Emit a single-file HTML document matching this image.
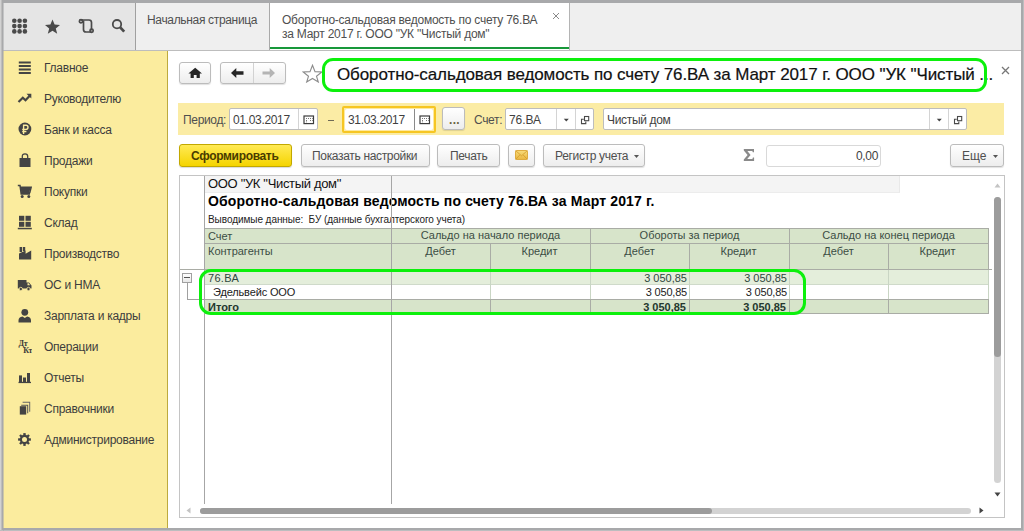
<!DOCTYPE html>
<html><head><meta charset="utf-8">
<style>
*{margin:0;padding:0;box-sizing:border-box}
html,body{width:1024px;height:531px;overflow:hidden;background:#a8a9ab;font-family:"Liberation Sans",sans-serif;color:#333;position:relative}
.a{position:absolute}
.t{position:absolute;white-space:nowrap;line-height:1}
.btn{position:absolute;border:1px solid #bcbcbc;border-radius:3px;background:linear-gradient(#ffffff,#ededed);box-shadow:0 1px 1px rgba(0,0,0,.12)}
.inp{position:absolute;border:1px solid #bdbdbd;border-radius:2px;background:#fff}
.side .t{font-size:12px;color:#3d3d3d;left:44px;letter-spacing:-0.25px}
.side svg{position:absolute;left:17px}
</style></head><body>
<!-- content base -->
<div class="a" style="left:0;top:0;width:1px;height:531px;background:#d2d2d2"></div>
<div class="a" style="left:1px;top:0;width:1px;height:531px;background:#bdbdbd"></div>
<div class="a" style="left:3px;top:3px;width:1018px;height:525px;background:#fff"></div>
<!-- top bar -->
<div class="a" style="left:3px;top:3px;width:132px;height:47px;background:#e5e5e5"></div>
<div class="a" style="left:135px;top:3px;width:1px;height:47px;background:#a0a0a0"></div>
<div class="a" style="left:136px;top:3px;width:885px;height:47px;background:#efefef"></div>
<div class="a" style="left:3px;top:50px;width:1018px;height:1px;background:#bdbdbd"></div>
<!-- top icons -->
<svg class="a" style="left:11px;top:17px" width="18" height="18" viewBox="0 0 18 18">
  <g fill="#4a4a4a">
    <circle cx="3.3" cy="3.8" r="2.3"/><circle cx="8.6" cy="3.8" r="2.3"/><circle cx="13.9" cy="3.8" r="2.3"/>
    <circle cx="3.3" cy="9.1" r="2.3"/><circle cx="8.6" cy="9.1" r="2.3"/><circle cx="13.9" cy="9.1" r="2.3"/>
    <circle cx="3.3" cy="14.4" r="2.3"/><circle cx="8.6" cy="14.4" r="2.3"/><circle cx="13.9" cy="14.4" r="2.3"/>
  </g>
</svg>
<svg class="a" style="left:44px;top:19px" width="17" height="16" viewBox="0 0 17 16">
  <polygon fill="#4a4a4a" points="8.5,0.6 10.6,5.6 16,5.9 11.8,9.4 13.2,14.8 8.5,11.8 3.8,14.8 5.2,9.4 1,5.9 6.4,5.6"/>
</svg>
<svg class="a" style="left:78px;top:18px" width="17" height="16" viewBox="0 0 17 16">
  <g fill="none" stroke="#4a4a4a" stroke-width="1.7">
    <path d="M2.5 2 H11 Q13.5 2 13.5 4.5 V12.5"/>
    <path d="M5.5 2.5 V11.5 Q5.5 14 8 14 H13.5"/>
    <circle cx="3" cy="3.2" r="1.6"/>
    <circle cx="13.6" cy="12.8" r="1.6"/>
  </g>
</svg>
<svg class="a" style="left:110px;top:17px" width="17" height="17" viewBox="0 0 17 17">
  <circle cx="7" cy="7.2" r="4.2" fill="none" stroke="#4a4a4a" stroke-width="1.8"/>
  <path d="M10.2 10.4 L14.2 14.6" stroke="#4a4a4a" stroke-width="2.8"/>
</svg>

<!-- tabs -->
<div class="t" style="left:147px;top:14px;font-size:12px;letter-spacing:-0.33px;color:#4f4f4f">Начальная страница</div>
<div class="a" style="left:269px;top:3px;width:1px;height:47px;background:#a9a9a9"></div>
<div class="a" style="left:270px;top:3px;width:299px;height:47px;background:#fff"></div>
<div class="a" style="left:569px;top:3px;width:1px;height:47px;background:#b4b4b4"></div>
<div class="a" style="left:270px;top:47px;width:299px;height:2px;background:#18983a"></div>
<div class="t" style="left:282px;top:13px;font-size:12px;letter-spacing:-0.24px;line-height:14px;color:#4f4f4f">Оборотно-сальдовая ведомость по счету 76.ВА<br>за Март 2017 г. ООО "УК "Чистый дом"</div>
<svg class="a" style="left:552px;top:12px" width="8" height="8" viewBox="0 0 8 8"><path d="M1 1 L7 7 M7 1 L1 7" stroke="#8a8a8a" stroke-width="1"/></svg>

<!-- sidebar -->
<div class="a" style="left:3px;top:51px;width:164px;height:477px;background:#fbec9e"></div>
<div class="a" style="left:167px;top:51px;width:1px;height:477px;background:#bdaa3e"></div>
<div class="side">
  <svg style="top:60px" width="15" height="15" viewBox="0 0 15 15"><g fill="#444"><rect x="1.8" y="1.5" width="12" height="2"/><rect x="1.8" y="5" width="12" height="2"/><rect x="1.8" y="8.5" width="12" height="2"/><rect x="1.8" y="12" width="12" height="2"/></g></svg>
  <div class="t" style="top:62px">Главное</div>
  <svg style="top:91px" width="15" height="15" viewBox="0 0 15 15"><path d="M1.5 11 L5.8 6.8 L8.5 9.3 L13 4.5" fill="none" stroke="#444" stroke-width="2.2"/><path d="M9.5 2.8 H14.3 V7.6 Z" fill="#444"/></svg>
  <div class="t" style="top:93px">Руководителю</div>
  <svg style="top:122px" width="15" height="15" viewBox="0 0 15 15"><circle cx="7.9" cy="7" r="6.4" fill="#444"/><path d="M6.6 12 V3.2 H9 Q11 3.2 11 5.3 Q11 7.4 9 7.4 H5.2 M5.2 9.5 H9.4" fill="none" stroke="#fbec9e" stroke-width="1.4"/></svg>
  <div class="t" style="top:124px">Банк и касса</div>
  <svg style="top:153px" width="15" height="15" viewBox="0 0 15 15"><path d="M2.5 5 H13.5 V14 H2.5 Z" fill="#444"/><path d="M5.3 6 V3.2 Q5.3 0.8 8 0.8 Q10.7 0.8 10.7 3.2 V6" fill="none" stroke="#444" stroke-width="1.3"/></svg>
  <div class="t" style="top:155px">Продажи</div>
  <svg style="top:184px" width="15" height="15" viewBox="0 0 15 15"><path d="M0.8 1.5 H3 L4.2 10 H13 M3.2 3.2 H14.2 L12.8 8.6 H4" fill="none" stroke="#444" stroke-width="1.5"/><path d="M3.6 3.6 H13.6 L12.5 8 H4.2 Z" fill="#444"/><circle cx="5.2" cy="12.6" r="1.5" fill="#444"/><circle cx="11.8" cy="12.6" r="1.5" fill="#444"/></svg>
  <div class="t" style="top:186px">Покупки</div>
  <svg style="top:215px" width="15" height="15" viewBox="0 0 15 15"><g fill="#444"><rect x="2" y="0.8" width="5.3" height="5"/><rect x="8.5" y="0.8" width="5.3" height="5"/><rect x="2" y="6.8" width="5.3" height="5"/><rect x="8.5" y="6.8" width="5.3" height="5"/><rect x="0.8" y="12.8" width="14" height="1.5"/></g></svg>
  <div class="t" style="top:217px">Склад</div>
  <svg style="top:246px" width="15" height="15" viewBox="0 0 15 15"><g fill="#444"><rect x="2.6" y="1" width="2.4" height="5"/><rect x="5.8" y="1" width="2.4" height="4"/><path d="M2 13.6 V7.6 L8.6 4.4 V7.8 L14.2 4.4 V13.6 Z"/></g></svg>
  <div class="t" style="top:248px">Производство</div>
  <svg style="top:277px" width="15" height="15" viewBox="0 0 15 15"><path d="M0.8 3 H9.5 V5.5 H12 L14.5 8.5 V11.5 H0.8 Z" fill="#444"/><path d="M10.5 6.3 H11.6 L13.2 8.3 H10.5 Z" fill="#fbec9e"/><circle cx="3.8" cy="12" r="1.7" fill="#444" stroke="#fbec9e" stroke-width="0.8"/><circle cx="11.5" cy="12" r="1.7" fill="#444" stroke="#fbec9e" stroke-width="0.8"/></svg>
  <div class="t" style="top:279px">ОС и НМА</div>
  <svg style="top:308px" width="15" height="15" viewBox="0 0 15 15"><circle cx="7.8" cy="4.3" r="3.4" fill="#444"/><path d="M1.5 14.5 V12.5 Q1.5 9 5.5 8.5 L7.8 10 L10.1 8.5 Q14 9 14 12.5 V14.5 Z" fill="#444"/></svg>
  <div class="t" style="top:310px">Зарплата и кадры</div>
  <svg style="top:339px" width="15" height="15" viewBox="0 0 15 15"><text x="1.6" y="7" font-family="Liberation Serif" font-size="8" font-weight="bold" fill="#3a3a3a" letter-spacing="-0.4">Дт</text><text x="6.2" y="13.6" font-family="Liberation Serif" font-size="8" font-weight="bold" fill="#3a3a3a" letter-spacing="-0.4">Кт</text></svg>
  <div class="t" style="top:341px">Операции</div>
  <svg style="top:370px" width="15" height="15" viewBox="0 0 15 15"><g fill="#444"><rect x="2" y="5.4" width="3" height="7"/><rect x="6" y="7.5" width="3" height="5"/><rect x="10" y="3" width="3" height="9.5"/><rect x="1.5" y="11.8" width="12.5" height="1.3"/></g></svg>
  <div class="t" style="top:372px">Отчеты</div>
  <svg style="top:401px" width="15" height="15" viewBox="0 0 15 15"><g fill="#444"><rect x="2.8" y="5.2" width="6.4" height="8.4"/><path d="M4.2 3.8 H11.2 V12.2 H10.2 V4.8 H4.2 Z" fill="#555"/><path d="M5.6 0.8 H13.2 V10.8 H12.2 V1.8 H5.6 Z" fill="#666"/></g></svg>
  <div class="t" style="top:403px">Справочники</div>
  <svg style="top:432px" width="15" height="15" viewBox="0 0 15 15"><g transform="translate(7.5 7.5)"><g fill="#444"><circle r="4.7"/><rect x="-1.2" y="-6.4" width="2.4" height="12.8"/><rect x="-1.2" y="-6.4" width="2.4" height="12.8" transform="rotate(45)"/><rect x="-1.2" y="-6.4" width="2.4" height="12.8" transform="rotate(90)"/><rect x="-1.2" y="-6.4" width="2.4" height="12.8" transform="rotate(135)"/></g><circle r="2.5" fill="#fbec9e"/></g></svg>
  <div class="t" style="top:434px">Администрирование</div>
</div>

<!-- nav buttons -->
<div class="btn" style="left:179px;top:62px;width:32px;height:22px"></div>
<svg class="a" style="left:188px;top:67px" width="15" height="12" viewBox="0 0 15 12"><path d="M7.2 0.8 L14 6.6 H11.8 V11 H8.6 V8 H5.8 V11 H2.6 V6.6 H0.4 Z" fill="#262626"/></svg>
<div class="btn" style="left:220px;top:62px;width:66px;height:22px"></div>
<div class="a" style="left:253px;top:63px;width:1px;height:20px;background:#d2d2d2"></div>
<svg class="a" style="left:230px;top:67px" width="15" height="12" viewBox="0 0 15 12"><path d="M1 6 L6.3 1 V4.3 H13.5 V7.7 H6.3 V11 Z" fill="#262626"/></svg>
<svg class="a" style="left:261px;top:67px" width="15" height="12" viewBox="0 0 15 12"><path d="M14 6 L8.7 1 V4.6 H1.5 V7.4 H8.7 V11 Z" fill="#b4b4b4"/></svg>
<svg class="a" style="left:302px;top:64px" width="21" height="19" viewBox="0 0 21 19"><polygon fill="none" stroke="#8c8c8c" stroke-width="1.1" points="10.5,1.2 13,7.6 19.8,7.9 14.5,12.2 16.3,18 10.5,14.5 4.7,18 6.5,12.2 1.2,7.9 8,7.6"/></svg>

<!-- title -->
<div class="t" style="left:337px;top:66px;font-size:17px;color:#111;letter-spacing:-0.1px;-webkit-text-stroke:0.2px #111">Оборотно-сальдовая ведомость по счету 76.ВА за Март 2017 г. ООО "УК "Чистый ...</div>
<svg class="a" style="left:1001px;top:66px" width="9" height="9" viewBox="0 0 9 9"><path d="M1 1 L8 8 M8 1 L1 8" stroke="#777" stroke-width="1.3"/></svg>

<!-- filter panel -->
<div class="a" style="left:178px;top:103px;width:826px;height:32px;background:#fbeca5"></div>
<div class="t" style="left:183px;top:114px;font-size:12px;letter-spacing:-0.33px;color:#4f4f4f">Период:</div>
<div class="inp" style="left:229px;top:108px;width:89px;height:22px"></div>
<div class="t" style="left:233px;top:114px;font-size:12px;letter-spacing:-0.33px;color:#3f3f3f">01.03.2017</div>
<div class="a" style="left:298px;top:109px;width:1px;height:20px;background:#d4d4d4"></div>
<svg class="a" style="left:303px;top:115px" width="12" height="10" viewBox="0 0 12 10"><rect x="1" y="1" width="9.5" height="7.6" fill="#fff" stroke="#3c3c3c" stroke-width="1.2"/><g fill="#777"><rect x="3" y="3" width="1" height="1"/><rect x="5" y="3" width="1" height="1"/><rect x="7" y="3" width="1" height="1"/><rect x="9" y="3" width="0.8" height="1"/><rect x="3" y="5" width="1" height="1"/><rect x="7" y="5" width="1" height="1"/><rect x="9" y="5" width="0.8" height="1"/><rect x="3" y="6.5" width="1" height="0.8"/></g></svg>
<div class="a" style="left:328px;top:120px;width:6px;height:1px;background:#6f6a55"></div>
<div class="a" style="left:342px;top:106px;width:94px;height:27px;border:2px solid #f6c623;border-radius:2px;background:#fde9a0"></div>
<div class="a" style="left:345px;top:109px;width:88px;height:21px;border-radius:2px;background:#fff"></div>
<div class="t" style="left:348px;top:114px;font-size:12px;letter-spacing:-0.33px;color:#3f3f3f">31.03.2017</div>
<div class="a" style="left:414px;top:109px;width:1px;height:21px;background:#8a8a8a"></div>
<svg class="a" style="left:419px;top:115px" width="12" height="10" viewBox="0 0 12 10"><rect x="1" y="1" width="9.5" height="7.6" fill="#fff" stroke="#3c3c3c" stroke-width="1.2"/><g fill="#777"><rect x="3" y="3" width="1" height="1"/><rect x="5" y="3" width="1" height="1"/><rect x="7" y="3" width="1" height="1"/><rect x="9" y="3" width="0.8" height="1"/><rect x="3" y="5" width="1" height="1"/><rect x="7" y="5" width="1" height="1"/><rect x="9" y="5" width="0.8" height="1"/><rect x="3" y="6.5" width="1" height="0.8"/></g></svg>
<div class="btn" style="left:442px;top:107px;width:23px;height:23px"></div>
<div class="t" style="left:449px;top:114px;font-size:12px;font-weight:bold;letter-spacing:0.3px;color:#6b6340">...</div>
<div class="t" style="left:474px;top:114px;font-size:12px;letter-spacing:-0.33px;color:#4f4f4f">Счет:</div>
<div class="inp" style="left:505px;top:108px;width:89px;height:22px"></div>
<div class="t" style="left:509px;top:114px;font-size:12px;letter-spacing:-0.1px;color:#3f3f3f">76.ВА</div>
<div class="a" style="left:556px;top:109px;width:1px;height:20px;background:#d4d4d4"></div>
<div class="a" style="left:575px;top:109px;width:1px;height:20px;background:#d4d4d4"></div>
<svg class="a" style="left:563px;top:118px" width="7" height="5" viewBox="0 0 7 5"><path d="M0.8 0.8 H5.8 L3.3 3.6 Z" fill="#444"/></svg>
<svg class="a" style="left:580px;top:115px" width="10" height="10" viewBox="0 0 10 10"><rect x="4.5" y="1.5" width="4.2" height="4.2" fill="#fff" stroke="#4a4a4a" stroke-width="1.1"/><path d="M3.8 4.2 H1.5 V8.6 H5.8 V6.5" fill="none" stroke="#4a4a4a" stroke-width="1.1"/></svg>
<div class="inp" style="left:603px;top:108px;width:364px;height:22px"></div>
<div class="t" style="left:607px;top:114px;font-size:12px;letter-spacing:-0.33px;color:#3f3f3f">Чистый дом</div>
<div class="a" style="left:929px;top:109px;width:1px;height:20px;background:#d4d4d4"></div>
<div class="a" style="left:948px;top:109px;width:1px;height:20px;background:#d4d4d4"></div>
<svg class="a" style="left:936px;top:118px" width="7" height="5" viewBox="0 0 7 5"><path d="M0.8 0.8 H5.8 L3.3 3.6 Z" fill="#444"/></svg>
<svg class="a" style="left:953px;top:115px" width="10" height="10" viewBox="0 0 10 10"><rect x="4.5" y="1.5" width="4.2" height="4.2" fill="#fff" stroke="#4a4a4a" stroke-width="1.1"/><path d="M3.8 4.2 H1.5 V8.6 H5.8 V6.5" fill="none" stroke="#4a4a4a" stroke-width="1.1"/></svg>

<!-- buttons row -->
<div class="a" style="left:179px;top:144px;width:113px;height:23px;border:1px solid #c2a800;border-radius:3px;background:linear-gradient(#ffea55,#f5d400);box-shadow:0 1px 1px rgba(0,0,0,.15)"></div>
<div class="t" style="left:191px;top:150px;font-size:12px;letter-spacing:-0.33px;font-weight:bold;color:#4a3c00">Сформировать</div>
<div class="btn" style="left:301px;top:144px;width:129px;height:23px"></div>
<div class="t" style="left:312px;top:150px;font-size:12px;letter-spacing:-0.33px;color:#4f4f4f">Показать настройки</div>
<div class="btn" style="left:437px;top:144px;width:63px;height:23px"></div>
<div class="t" style="left:450px;top:150px;font-size:12px;letter-spacing:-0.33px;color:#4f4f4f">Печать</div>
<div class="btn" style="left:508px;top:144px;width:27px;height:23px"></div>
<svg class="a" style="left:515px;top:150px" width="13" height="10" viewBox="0 0 13 10"><defs><linearGradient id="eg" x1="0" y1="0" x2="0" y2="1"><stop offset="0" stop-color="#f8dc7c"/><stop offset="1" stop-color="#eab640"/></linearGradient></defs><rect x="0.5" y="0.5" width="12" height="9" rx="0.8" fill="url(#eg)" stroke="#dba634" stroke-width="0.9"/><path d="M0.8 0.8 L6.5 5.8 L12.2 0.8 M0.8 9.2 L4.8 5 M12.2 9.2 L8.2 5" fill="none" stroke="#d39a28" stroke-width="0.8"/></svg>
<div class="btn" style="left:543px;top:144px;width:102px;height:23px"></div>
<div class="t" style="left:555px;top:150px;font-size:12px;letter-spacing:-0.33px;color:#4f4f4f">Регистр учета</div>
<svg class="a" style="left:633px;top:154px" width="7" height="5" viewBox="0 0 7 5"><path d="M1 1 H6 L3.5 4 Z" fill="#555"/></svg>
<svg class="a" style="left:743px;top:148px" width="12" height="14" viewBox="0 0 12 14"><path d="M0.8 1 H11 V4.2 H9.8 L9.3 3 H4.4 L7.6 7 L4.2 11 H9.4 L9.9 9.6 H11.1 V13 H0.8 V11.6 L4.6 7 L0.8 2.4 Z" fill="#8a8a8a"/></svg>
<div class="inp" style="left:766px;top:145px;width:115px;height:22px;border-color:#d9d9d9;border-radius:3px"></div>
<div class="t" style="left:856px;top:150px;font-size:12px;letter-spacing:-0.33px;color:#3f3f3f">0,00</div>
<div class="btn" style="left:950px;top:144px;width:54px;height:23px"></div>
<div class="t" style="left:962px;top:150px;font-size:12px;letter-spacing:0px;color:#4f4f4f">Еще</div>
<svg class="a" style="left:992px;top:154px" width="7" height="5" viewBox="0 0 7 5"><path d="M1 1 H6 L3.5 4 Z" fill="#555"/></svg>

<!-- report -->
<div class="a" style="left:179px;top:175px;width:826px;height:343px;border:1px solid #c4c4c4;background:#fff"></div>

<!-- report contents -->
<div class="a" style="left:205px;top:176px;width:695px;height:17px;background:#f4f4f4;border-right:1px solid #e9e9e9;border-bottom:1px solid #ececec"></div>
<div class="t" style="left:208px;top:177px;font-size:13px;color:#111;letter-spacing:-0.33px">ООО "УК "Чистый дом"</div>
<div class="t" style="left:208px;top:194px;font-size:14px;font-weight:bold;color:#000;letter-spacing:0.15px">Оборотно-сальдовая ведомость по счету 76.ВА за Март 2017 г.</div>
<div class="t" style="left:208px;top:215px;font-size:10px;color:#222;letter-spacing:-0.06px">Выводимые данные:&nbsp; БУ (данные бухгалтерского учета)</div>
<!-- header -->
<div class="a" style="left:204px;top:228px;width:785px;height:42px;background:#d7e4ca"></div>
<div class="a" style="left:204px;top:269px;width:785px;height:15px;background:#e4eedb"></div>
<div class="a" style="left:204px;top:299px;width:785px;height:15px;background:#d7e4ca"></div>
<!-- horizontal lines -->
<div class="a" style="left:204px;top:228px;width:785px;height:1px;background:#a9aca5"></div>
<div class="a" style="left:204px;top:243px;width:785px;height:1px;background:#a9aca5"></div>
<div class="a" style="left:180px;top:269px;width:812px;height:1px;background:#a9aca5"></div>
<div class="a" style="left:204px;top:284px;width:785px;height:1px;background:#cfdaca"></div>
<div class="a" style="left:204px;top:299px;width:785px;height:1px;background:#a9aca5"></div>
<div class="a" style="left:204px;top:313px;width:785px;height:1px;background:#a9aca5"></div>
<!-- vertical lines -->
<div class="a" style="left:204px;top:176px;width:1px;height:328px;background:#a6a6a6"></div>
<div class="a" style="left:391px;top:176px;width:1px;height:328px;background:#a6a6a6"></div>
<div class="a" style="left:490px;top:243px;width:1px;height:27px;background:#a9aca5"></div>
<div class="a" style="left:490px;top:270px;width:1px;height:29px;background:#c9d5c4"></div>
<div class="a" style="left:490px;top:299px;width:1px;height:15px;background:#a9aca5"></div>
<div class="a" style="left:590px;top:228px;width:1px;height:42px;background:#a9aca5"></div>
<div class="a" style="left:590px;top:270px;width:1px;height:29px;background:#c9d5c4"></div>
<div class="a" style="left:590px;top:299px;width:1px;height:15px;background:#a9aca5"></div>
<div class="a" style="left:689px;top:243px;width:1px;height:27px;background:#a9aca5"></div>
<div class="a" style="left:689px;top:270px;width:1px;height:29px;background:#c9d5c4"></div>
<div class="a" style="left:689px;top:299px;width:1px;height:15px;background:#a9aca5"></div>
<div class="a" style="left:789px;top:228px;width:1px;height:42px;background:#a9aca5"></div>
<div class="a" style="left:789px;top:270px;width:1px;height:29px;background:#c9d5c4"></div>
<div class="a" style="left:789px;top:299px;width:1px;height:15px;background:#a9aca5"></div>
<div class="a" style="left:888px;top:243px;width:1px;height:27px;background:#a9aca5"></div>
<div class="a" style="left:888px;top:270px;width:1px;height:29px;background:#c9d5c4"></div>
<div class="a" style="left:888px;top:299px;width:1px;height:15px;background:#a9aca5"></div>
<div class="a" style="left:988px;top:228px;width:1px;height:42px;background:#a9aca5"></div>
<div class="a" style="left:988px;top:270px;width:1px;height:29px;background:#c9d5c4"></div>
<div class="a" style="left:988px;top:299px;width:1px;height:15px;background:#a9aca5"></div>
<!-- header texts -->
<div class="t" style="left:208px;top:231px;font-size:11px;color:#3b4d44">Счет</div>
<div class="t" style="left:208px;top:246px;font-size:11px;color:#3b4d44">Контрагенты</div>
<div class="t" style="left:391px;width:199px;text-align:center;top:230px;font-size:11px;color:#3b4d44">Сальдо на начало периода</div>
<div class="t" style="left:590px;width:199px;text-align:center;top:230px;font-size:11px;color:#3b4d44">Обороты за период</div>
<div class="t" style="left:789px;width:199px;text-align:center;top:230px;font-size:11px;color:#3b4d44">Сальдо на конец периода</div>
<div class="t" style="left:391px;width:99px;text-align:center;top:246px;font-size:11px;color:#3b4d44">Дебет</div>
<div class="t" style="left:490px;width:99px;text-align:center;top:246px;font-size:11px;color:#3b4d44">Кредит</div>
<div class="t" style="left:590px;width:99px;text-align:center;top:246px;font-size:11px;color:#3b4d44">Дебет</div>
<div class="t" style="left:689px;width:99px;text-align:center;top:246px;font-size:11px;color:#3b4d44">Кредит</div>
<div class="t" style="left:789px;width:99px;text-align:center;top:246px;font-size:11px;color:#3b4d44">Дебет</div>
<div class="t" style="left:888px;width:99px;text-align:center;top:246px;font-size:11px;color:#3b4d44">Кредит</div>
<!-- data -->
<div class="t" style="left:208px;top:273px;font-size:11px;color:#2f4741;letter-spacing:0.3px">76.ВА</div>
<div class="t" style="left:213px;top:287px;font-size:11px;color:#222;letter-spacing:-0.15px">Эдельвейс ООО</div>
<div class="t" style="left:208px;top:302px;font-size:11px;font-weight:bold;color:#24382f">Итого</div>
<div class="t" style="left:590px;width:97px;text-align:right;top:273px;font-size:11px;color:#2f4741">3 050,85</div>
<div class="t" style="left:689px;width:98px;text-align:right;top:273px;font-size:11px;color:#2f4741">3 050,85</div>
<div class="t" style="left:590px;width:97px;text-align:right;top:287px;font-size:11px;color:#222;letter-spacing:-0.2px">3 050,85</div>
<div class="t" style="left:689px;width:98px;text-align:right;top:287px;font-size:11px;color:#222;letter-spacing:-0.2px">3 050,85</div>
<div class="t" style="left:590px;width:96px;text-align:right;top:302px;font-size:11px;font-weight:bold;color:#24382f">3 050,85</div>
<div class="t" style="left:689px;width:97px;text-align:right;top:302px;font-size:11px;font-weight:bold;color:#24382f">3 050,85</div>
<!-- tree -->
<div class="a" style="left:187px;top:282px;width:1px;height:18px;background:#a0a0a0"></div>
<div class="a" style="left:187px;top:299px;width:17px;height:1px;background:#a0a0a0"></div>
<div class="a" style="left:182px;top:273px;width:10px;height:10px;border:1px solid #a0a0a0;background:linear-gradient(#fff,#e8e8e8)"></div>
<div class="a" style="left:184px;top:277px;width:6px;height:1px;background:#555"></div>
<!-- scrollbars -->
<svg class="a" style="left:994px;top:183px" width="7" height="5" viewBox="0 0 7 5"><path d="M0.5 4.5 H6.5 L3.5 0.5 Z" fill="#c4c4c4"/></svg>
<div class="a" style="left:994px;top:197px;width:7px;height:286px;border-radius:3.5px;background:#d3d3d3"></div>
<div class="a" style="left:994px;top:197px;width:7px;height:160px;border-radius:3.5px;background:#9c9c9c"></div>
<svg class="a" style="left:994px;top:492px" width="7" height="5" viewBox="0 0 7 5"><path d="M0.5 0.5 H6.5 L3.5 4.5 Z" fill="#444"/></svg>
<svg class="a" style="left:186px;top:507px" width="5" height="7" viewBox="0 0 5 7"><path d="M4.5 0.5 V6.5 L0.5 3.5 Z" fill="#c4c4c4"/></svg>
<div class="a" style="left:200px;top:508px;width:771px;height:6px;border-radius:3px;background:#d3d3d3"></div>
<div class="a" style="left:200px;top:508px;width:512px;height:6px;border-radius:3px;background:#9c9c9c"></div>
<svg class="a" style="left:979px;top:507px" width="5" height="7" viewBox="0 0 5 7"><path d="M0.5 0.5 V6.5 L4.5 3.5 Z" fill="#444"/></svg>
<!-- annotation 2 -->
<div class="a" style="left:199px;top:269px;width:607px;height:46px;border:3px solid #0cf00c;border-radius:12px"></div>


<!-- edges -->
<div class="a" style="left:1023px;top:0;width:1px;height:531px;background:#bcbdbf"></div>
<div class="a" style="left:0;top:530px;width:1024px;height:1px;background:#bcbdbf"></div>
<!-- left edge blend -->
<div class="a" style="left:3px;top:0;width:1px;height:531px;background:rgba(168,169,171,0.55)"></div>
<!-- annotations -->
<div class="a" style="left:322px;top:58px;width:665px;height:34px;border:3px solid #0cf00c;border-radius:11px"></div>
</body></html>
